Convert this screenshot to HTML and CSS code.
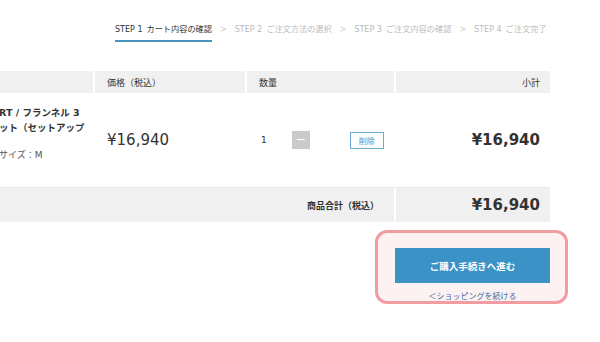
FILE: index.html
```html
<!DOCTYPE html>
<html lang="ja">
<head>
  <meta charset="UTF-8" />
  <title>ショッピングカート</title>
  <link rel="stylesheet" href="styles.css">
</head>
<body>
  <nav class="steps">
    <span class="step active"><span class="step-no">STEP 1</span>カート内容の確認</span>
    <span class="sep">&gt;</span>
    <span class="step"><span class="step-no">STEP 2</span>ご注文方法の選択</span>
    <span class="sep">&gt;</span>
    <span class="step"><span class="step-no">STEP 3</span>ご注文内容の確認</span>
    <span class="sep">&gt;</span>
    <span class="step"><span class="step-no">STEP 4</span>ご注文完了</span>
  </nav>

  <div class="cart">
    <div class="cart-row cart-head">
      <div class="cell"></div>
      <div class="cell">価格（税込）</div>
      <div class="cell">数量</div>
      <div class="cell right">小計</div>
    </div>

    <div class="cart-row cart-item">
      <div class="cell product">
        <p class="product-name">RT / フランネル 3<br>ット（セットアップ</p>
        <p class="product-size">サイズ：M</p>
      </div>
      <div class="cell price">¥16,940</div>
      <div class="cell qty">
        <span class="qty-num">1</span>
        <button class="minus" aria-label="減らす"></button>
        <button class="remove">削除</button>
      </div>
      <div class="cell subtotal right">¥16,940</div>
    </div>

    <div class="cart-total">
      <div class="cell total-label">商品合計（税込）</div>
      <div class="cell subtotal right">¥16,940</div>
    </div>
  </div>

  <div class="actions">
    <div class="highlight">
      <button class="checkout">ご購入手続きへ進む</button>
      <a class="back-link" href="#">＜ショッピングを続ける</a>
    </div>
  </div>
</body>
</html>
```

FILE: styles.css
```css
* {
  box-sizing: border-box;
}

body {
  margin: 0;
  overflow: hidden;
  background: #fff;
  color: #333;
  font-family: "DejaVu Sans", "Noto Sans CJK JP", sans-serif;
}

/* step navigation */
.steps {
  display: flex;
  align-items: flex-start;
  gap: 8px;
  margin-left: 115px;
  padding-top: 24px;
  font-size: 8.2px;
  line-height: 11px;
  color: #bbb;
}

.step {
  padding-bottom: 5px;
  white-space: nowrap;
}

.step-no {
  margin-right: 4px;
  font-size: 8px;
}

.step.active {
  color: #333;
  border-bottom: 2px solid #4a95c0;
}

.sep {
  color: #ccc;
  font-size: 8px;
}

/* cart table */
.cart {
  width: 700px;
  margin-left: -150px;
  margin-top: 29px;
}

.cart-row {
  display: grid;
  grid-template-columns: 243px 152px 149px 156px;
}

.cell {
  display: flex;
  align-items: center;
  padding: 0 10px 0 12px;
}

.cell + .cell {
  border-left: 2px solid #fff;
}

.right {
  justify-content: flex-end;
}

.cart-head {
  height: 22px;
  font-size: 9px;
}

.cart-head .cell {
  background: #f0f0f0;
}

.cart-item {
  height: 95px;
  border-bottom: 1px solid #e8e8e8;
}

.product {
  display: block;
  padding: 12px 0 0 149px;
  white-space: nowrap;
}

.product-name {
  margin: 0;
  font-size: 9.5px;
  line-height: 15px;
  font-weight: 700;
}

.product-size {
  margin: 13px 0 0;
  font-size: 9px;
  line-height: 15px;
  color: #555;
}

.price {
  font-size: 15px;
}

.qty {
  padding-left: 14px;
  font-size: 9px;
}

.qty-num {
  width: 7px;
}

.minus {
  width: 18px;
  height: 18px;
  margin-left: 24px;
  border: none;
  background: #cacaca;
  position: relative;
  padding: 0;
}

.minus::after {
  content: "";
  position: absolute;
  left: 5px;
  top: 8px;
  width: 8px;
  height: 1px;
  background: #fff;
}

.remove {
  width: 35px;
  height: 17px;
  margin-left: 40px;
  padding: 0;
  border: 1px solid #6aaad3;
  background: #fff;
  color: #4a8fc0;
  font-family: inherit;
  font-size: 8px;
}

.subtotal {
  font-size: 15px;
  font-weight: 700;
}

.cart-total {
  display: grid;
  grid-template-columns: 544px 156px;
  height: 34px;
  background: #f0f0f0;
}

.total-label {
  justify-content: flex-end;
  padding-right: 15px;
  font-size: 9px;
  font-weight: 700;
}

/* checkout */
.actions {
  display: flex;
  justify-content: flex-end;
  margin-top: 8px;
  margin-right: 32px;
}

.highlight {
  width: 193px;
  height: 74px;
  padding: 15px 15px 0 17px;
  border: 3px solid #f19ca0;
  border-radius: 12px;
  background: #fdf2f2;
  display: flex;
  flex-direction: column;
  align-items: center;
}

.checkout {
  width: 155px;
  height: 35px;
  flex-shrink: 0;
  border: none;
  background: #3b92c6;
  color: #fff;
  font-family: inherit;
  font-size: 9.5px;
  font-weight: 700;
}

.back-link {
  margin-top: 9px;
  font-size: 8px;
  line-height: 10px;
  color: #3f6b9e;
  text-decoration: none;
}
```
